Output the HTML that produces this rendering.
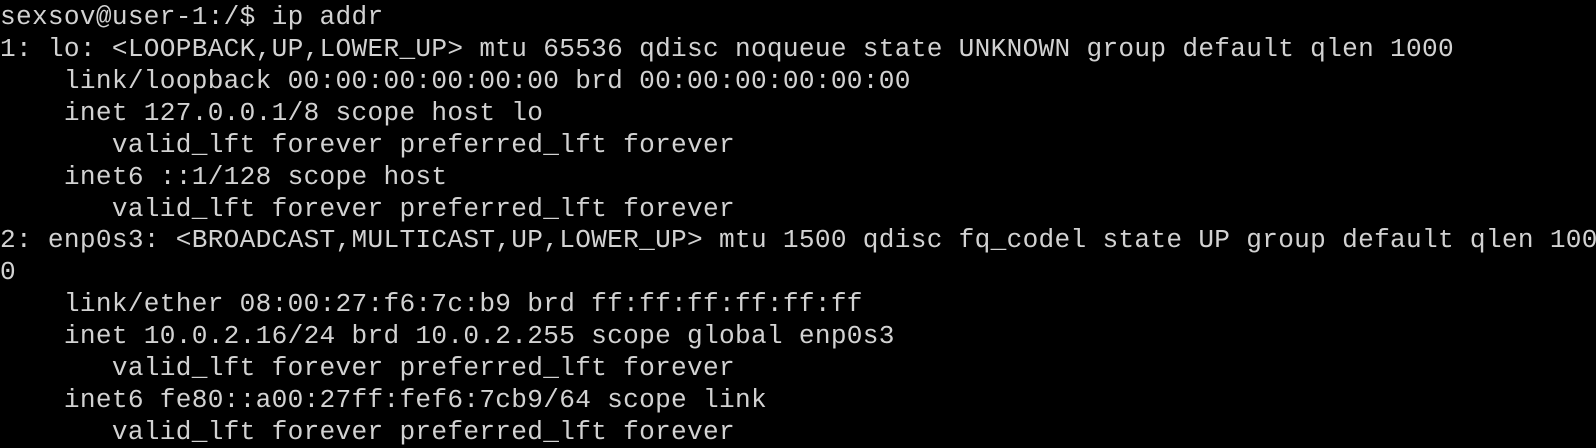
<!DOCTYPE html>
<html><head><meta charset="utf-8"><style>
html,body{margin:0;padding:0;background:#000;}
body{width:1596px;height:446px;overflow:hidden;position:relative;}
div{position:absolute;left:0;height:31px;font-family:"Liberation Mono","DejaVu Sans Mono",monospace;font-size:26.13px;letter-spacing:0.3px;line-height:31px;color:#d2d2d2;white-space:pre;}
</style></head><body>
<div style="top:2px">sexsov@user-1:/$ ip addr</div>
<div style="top:33.92px">1: lo: &lt;LOOPBACK,UP,LOWER_UP&gt; mtu 65536 qdisc noqueue state UNKNOWN group default qlen 1000</div>
<div style="top:65.84px">    link/loopback 00:00:00:00:00:00 brd 00:00:00:00:00:00</div>
<div style="top:97.76px">    inet 127.0.0.1/8 scope host lo</div>
<div style="top:129.68px">       valid_lft forever preferred_lft forever</div>
<div style="top:161.6px">    inet6 ::1/128 scope host</div>
<div style="top:193.52px">       valid_lft forever preferred_lft forever</div>
<div style="top:225.44px">2: enp0s3: &lt;BROADCAST,MULTICAST,UP,LOWER_UP&gt; mtu 1500 qdisc fq_codel state UP group default qlen 100</div>
<div style="top:257.36px">0</div>
<div style="top:289.28px">    link/ether 08:00:27:f6:7c:b9 brd ff:ff:ff:ff:ff:ff</div>
<div style="top:321.2px">    inet 10.0.2.16/24 brd 10.0.2.255 scope global enp0s3</div>
<div style="top:353.12px">       valid_lft forever preferred_lft forever</div>
<div style="top:385.04px">    inet6 fe80::a00:27ff:fef6:7cb9/64 scope link</div>
<div style="top:416.96px">       valid_lft forever preferred_lft forever</div>
</body></html>
